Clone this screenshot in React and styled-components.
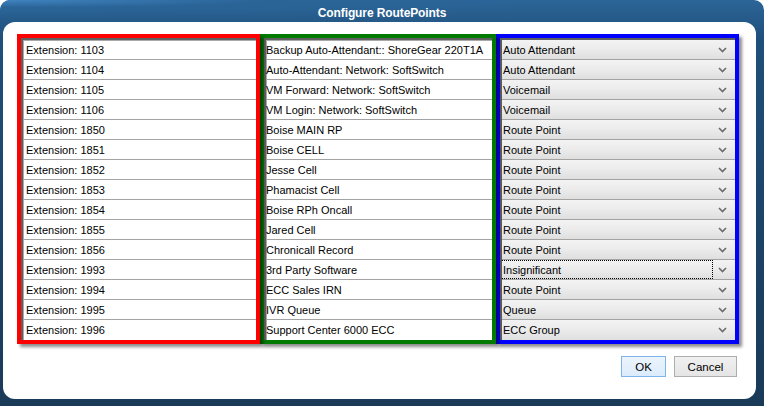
import React from "react";
import styled, { createGlobalStyle } from "styled-components";

const GlobalStyle = createGlobalStyle`
  html, body {
    margin: 0;
    padding: 0;
    background: #ffffff;
  }
  body {
    font-family: Tahoma, "Liberation Sans", Arial, sans-serif;
  }
`;

const Window = styled.div`
  width: 764px;
  height: 406px;
  display: flex;
  flex-direction: column;
  border-radius: 10px 10px 0 0;
  background: linear-gradient(180deg, #2b6597 0%, #1f4f7b 10%, #1c4266 60%, #1a3a58 100%);
  overflow: hidden;
`;

const TitleBar = styled.div`
  height: 22px;
  display: flex;
  align-items: center;
  justify-content: center;
  color: #ffffff;
  font-family: "Liberation Sans", Arial, sans-serif;
  font-weight: bold;
  font-size: 12px;
  letter-spacing: -0.1px;
  padding-top: 3px;
  box-sizing: border-box;
  background: radial-gradient(ellipse at 0% 0%, #3f83bf 0%, #2a6396 25%, rgba(30, 75, 115, 0) 60%);
`;

const Panel = styled.div`
  flex: 1;
  margin: 0 8px 7px 3px;
  background: #ffffff;
  border-radius: 12px;
  padding: 12px 17px 0 14px;
  display: flex;
  flex-direction: column;
`;

const Columns = styled.div`
  display: grid;
  grid-template-columns: 243px 236px 243px;
`;

const Box = styled.div`
  border: 4px solid ${(p) => p.$color};
  box-shadow: 3px 3px 3px rgba(0, 0, 0, 0.45);
  background: #ffffff;
  position: relative;
  z-index: ${(p) => p.$z};
`;

const Inset = styled.div`
  border-top: 2px solid #5f5f5f;
  border-left: 2px solid #5f5f5f;
  box-shadow: inset 1px 1px 0 #a9a9a9;
  display: flex;
  flex-direction: column;
`;

const Cell = styled.div`
  height: 20px;
  box-sizing: border-box;
  border-bottom: ${(p) => (p.$last ? "none" : "1px solid #a3a3a3")};
  display: flex;
  align-items: center;
  padding-left: ${(p) => p.$pad}px;
  font-family: "Liberation Sans", Arial, sans-serif;
  font-size: 11px;
  color: #000000;
  white-space: nowrap;
  overflow: hidden;
`;

const SelectCell = styled(Cell)`
  background: linear-gradient(180deg, #f3f3f3 0%, #ebebeb 50%, #dfdfdf 100%);
  justify-content: space-between;
  padding-right: 8px;
`;

const SelectLabel = styled.span`
  display: flex;
  align-items: center;
  height: 17px;
  flex: 1;
  margin-right: 6px;
  margin-left: -1px;
  padding-left: 1px;
  outline: ${(p) => (p.$focus ? "1px dotted #000000" : "none")};
`;

const Footer = styled.div`
  display: flex;
  justify-content: flex-end;
  gap: 8px;
  margin-top: 12px;
  padding-right: 2px;
`;

const Button = styled.button`
  height: 21px;
  width: ${(p) => p.$w}px;
  box-sizing: border-box;
  border: 1px solid ${(p) => (p.$primary ? "#7eb4ea" : "#adadad")};
  background: ${(p) =>
    p.$primary
      ? "linear-gradient(180deg, #ecf4fc 0%, #dcecfc 100%)"
      : "linear-gradient(180deg, #f0f0f0 0%, #e5e5e5 100%)"};
  font-family: "Liberation Sans", Arial, sans-serif;
  font-size: 11.5px;
  color: #000000;
  padding: 0;
  border-radius: 0;
`;

const Chevron = () => (
  <svg width="9" height="6" viewBox="0 0 9 6">
    <path d="M1 1 L4.5 4.5 L8 1" fill="none" stroke="#6b6b6b" strokeWidth="1.6" />
  </svg>
);

const rows = [
  ["1103", "Backup Auto-Attendant:: ShoreGear 220T1A", "Auto Attendant"],
  ["1104", "Auto-Attendant: Network: SoftSwitch", "Auto Attendant"],
  ["1105", "VM Forward: Network: SoftSwitch", "Voicemail"],
  ["1106", "VM Login: Network: SoftSwitch", "Voicemail"],
  ["1850", "Boise MAIN RP", "Route Point"],
  ["1851", "Boise CELL", "Route Point"],
  ["1852", "Jesse Cell", "Route Point"],
  ["1853", "Phamacist Cell", "Route Point"],
  ["1854", "Boise RPh Oncall", "Route Point"],
  ["1855", "Jared Cell", "Route Point"],
  ["1856", "Chronicall Record", "Route Point"],
  ["1993", "3rd Party Software", "Insignificant"],
  ["1994", "ECC Sales IRN", "Route Point"],
  ["1995", "IVR Queue", "Queue"],
  ["1996", "Support Center 6000 ECC", "ECC Group"],
];

export default function App() {
  const last = rows.length - 1;
  return (
    <>
      <GlobalStyle />
      <Window>
        <TitleBar>Configure RoutePoints</TitleBar>
        <Panel>
          <Columns>
            <Box $color="#ff0000" $z={3}>
              <Inset>
                {rows.map((r, i) => (
                  <Cell key={r[0]} $pad={3} $last={i === last}>
                    Extension: {r[0]}
                  </Cell>
                ))}
              </Inset>
            </Box>
            <Box $color="#007a00" $z={2}>
              <Inset>
                {rows.map((r, i) => (
                  <Cell key={r[0]} $pad={0} $last={i === last}>
                    {r[1]}
                  </Cell>
                ))}
              </Inset>
            </Box>
            <Box $color="#0000ff" $z={1}>
              <Inset>
                {rows.map((r, i) => (
                  <SelectCell key={r[0]} $pad={1} $last={i === last}>
                    <SelectLabel $focus={r[2] === "Insignificant"}>{r[2]}</SelectLabel>
                    <Chevron />
                  </SelectCell>
                ))}
              </Inset>
            </Box>
          </Columns>
          <Footer>
            <Button $primary $w={45}>OK</Button>
            <Button $w={63}>Cancel</Button>
          </Footer>
        </Panel>
      </Window>
    </>
  );
}
